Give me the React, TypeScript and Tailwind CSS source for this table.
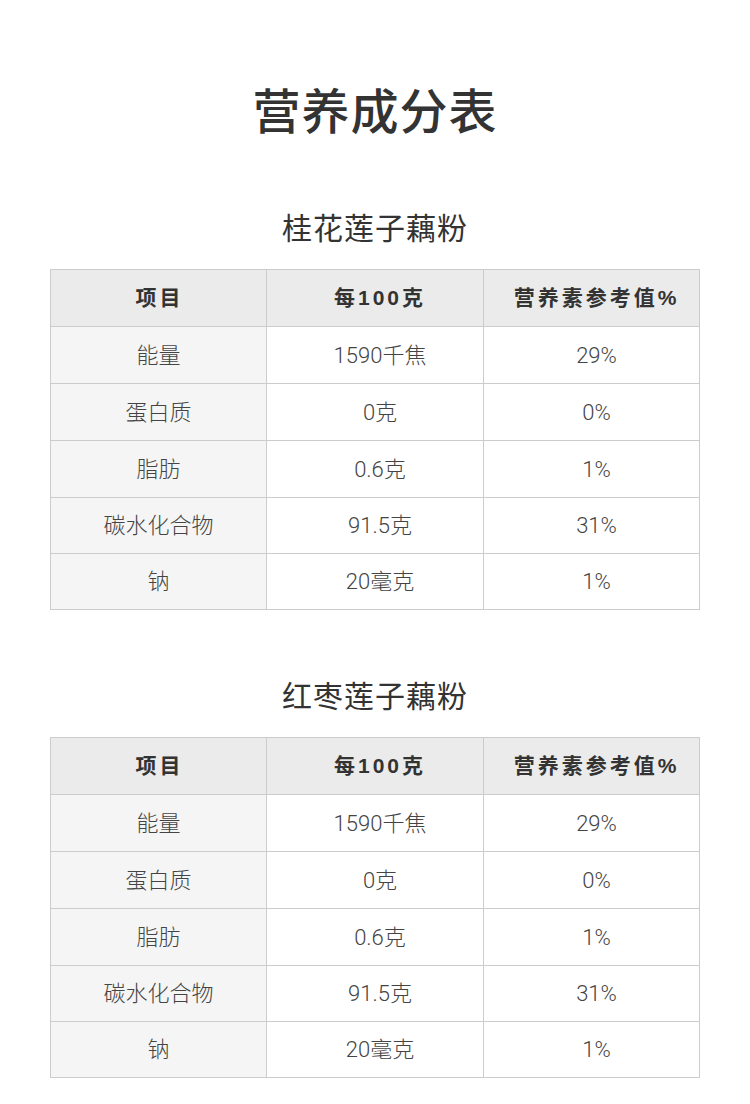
import React from "react";

const rows = [
  ["能量", "1590千焦", "29%"],
  ["蛋白质", "0克", "0%"],
  ["脂肪", "0.6克", "1%"],
  ["碳水化合物", "91.5克", "31%"],
  ["钠", "20毫克", "1%"],
];

const font = { fontFamily: '"Liberation Sans", "Noto Sans CJK SC", sans-serif' };
const bodyFont = { fontFamily: 'Roboto, "Noto Sans CJK SC", sans-serif' };

function Table() {
  const heights = ["h-[57px]", "h-[57px]", "h-[57px]", "h-[56px]", "h-[56px]"];
  return (
    <div className="mx-auto grid w-[650px] grid-cols-[216px_217px_216px] border-l border-t border-[#cccccc]">
      {["项目", "每100克", "营养素参考值%"].map((h, j) => (
        <div
          key={h}
          className={
            "flex h-[57px] items-center justify-center border-b border-r border-[#cccccc] bg-[#ebebeb] text-[21px] font-bold tracking-[3px] text-[#333333]" +
            (j === 0 ? " pl-[2px]" : " pl-[10px]")
          }
        >
          {h}
        </div>
      ))}
      {rows.map((r, i) =>
        r.map((c, j) => (
          <div
            key={i + "-" + j}
            style={bodyFont}
            className={
              "flex items-center justify-center border-b border-r border-[#cccccc] text-[22px] font-light text-[#444444] " +
              heights[i] +
              (j === 0 ? " bg-[#f5f5f5]" : " bg-white pl-[10px]")
            }
          >
            {c}
          </div>
        ))
      )}
    </div>
  );
}

export default function App() {
  return (
    <div className="min-h-[1104px] w-[750px] bg-white pt-[89px]" style={font}>
      <h1 className="text-center text-[48px] font-medium leading-[48px] tracking-[1px] text-[#333333]">营养成分表</h1>
      <h2 className="mt-[77px] text-center text-[30px] leading-[30px] tracking-[1px] text-[#333333]">桂花莲子藕粉</h2>
      <div className="mt-[25px]">
        <Table />
      </div>
      <h2 className="mt-[72px] text-center text-[30px] leading-[30px] tracking-[1px] text-[#333333]">红枣莲子藕粉</h2>
      <div className="mt-[25px]">
        <Table />
      </div>
    </div>
  );
}
